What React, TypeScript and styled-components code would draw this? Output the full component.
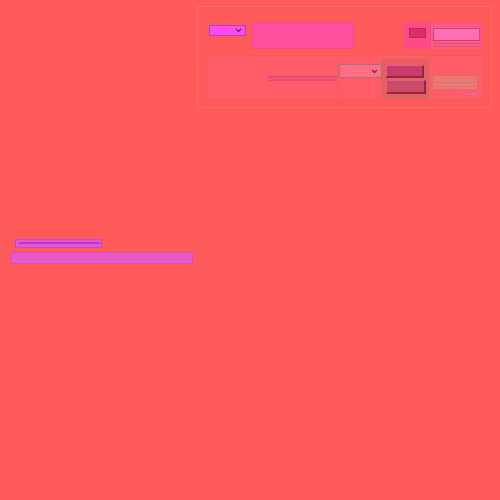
import styled, { createGlobalStyle } from "styled-components";

const Global = createGlobalStyle`
  html, body {
    margin: 0;
    padding: 0;
    background: #ff5a5a;
    font-family: "Liberation Sans", Arial, sans-serif;
  }
`;

// styled-components

const Page = styled.div`
  width: 500px;
  height: 500px;
  background: #ff5a5a;
  overflow: hidden;
`;

const Panel = styled.div`
  margin: 6px 0 0 197px;
  width: 293px;
  height: 100px;
  border: 1px solid #ff6a66;
  display: flex;
  flex-direction: column;
`;

const TopRow = styled.div`
  display: flex;
  align-items: flex-start;
  margin-top: 15px;
  height: 27px;
  padding-right: 9px;
`;

const Select = styled.div<{ $w: number; $h: number; $bg: string; $border: string }>`
  width: ${(p) => p.$w}px;
  height: ${(p) => p.$h}px;
  box-sizing: border-box;
  background: ${(p) => p.$bg};
  border: 1px solid ${(p) => p.$border};
  display: flex;
  align-items: center;
  justify-content: flex-end;
  padding-right: 3px;
  svg {
    display: block;
  }
`;

const FirstSelect = styled(Select)`
  margin: 3px 0 0 11px;
`;

const PinkBox = styled.div`
  margin-left: 6px;
  width: 102px;
  height: 27px;
  box-sizing: border-box;
  background: #ff4f9c;
  border: 1px solid #f04896;
`;

const Group = styled.div`
  margin-left: auto;
  width: 78px;
  height: 27px;
  display: flex;
  background: #ff4a8a;
`;

const GroupLeft = styled.div`
  width: 26px;
  display: flex;
  justify-content: center;
  padding-top: 6px;
  border-right: 1px solid #f0488a;
`;

const DarkButton = styled.div`
  width: 17px;
  height: 10px;
  box-sizing: border-box;
  background: #d8306a;
  border: 1px solid #b8285a;
`;

const GroupRight = styled.div`
  flex: 1;
  background: #ff5c7c;
  border-top: 1px solid #f05090;
  border-right: 1px solid #f05090;
  padding: 5px 1px 0 2px;
  display: flex;
  flex-direction: column;
  gap: 1px;
`;

const Input = styled.div`
  height: 13px;
  box-sizing: border-box;
  background: #ff6eb4;
  border: 1px solid #b84a88;
  border-right-color: #c85090;
`;

const Hint = styled.div`
  height: 1px;
  background: #d85088;
  margin-top: 1px;
`;

const BottomRow = styled.div`
  margin: 6px 0 0 8px;
  width: 278px;
  height: 45px;
  box-sizing: border-box;
  background: #ff5c68;
  border: 1px solid #f8546a;
  display: flex;
  align-items: flex-start;
  padding-left: 61px;
`;

const Slider = styled.div`
  margin-top: 20px;
  width: 69px;
  height: 5px;
  box-sizing: border-box;
  background: #f0507a;
  border-top: 1px solid #d84870;
  border-bottom: 1px solid #e04c78;
`;

const SelectColumn = styled.div`
  width: 45px;
  height: 39px;
  margin-top: 3px;
  display: flex;
  flex-direction: column;
  padding: 5px 0 0 1px;
  box-sizing: border-box;
  border-left: 1px solid #f8586a;
  border-right: 1px solid #f8586a;
`;

const ButtonStack = styled.div`
  margin: 3px 0 0 0;
  width: 47px;
  height: 39px;
  box-sizing: border-box;
  background: #e85c62;
  border: 1px solid #c87058;
  display: flex;
  flex-direction: column;
  padding: 5px 0 0 3px;
  gap: 2px;
`;

const StackButton = styled.div<{ $w: number; $h: number; $bg: string }>`
  width: ${(p) => p.$w}px;
  height: ${(p) => p.$h}px;
  box-sizing: border-box;
  background: ${(p) => p.$bg};
  border: 1px solid #e06080;
  border-right: 2px solid #8a2a44;
  border-bottom: 2px solid #8a2a44;
`;

const StripeBox = styled.div`
  margin: 16px 0 0 1px;
  width: 50px;
  height: 26px;
  box-sizing: border-box;
  border: 1px solid #e86a6a;
  padding: 3px 2px 0 2px;
  display: flex;
  flex-direction: column;
`;

const Stripes = styled.div`
  display: flex;
  flex-direction: column;
  gap: 1px;
  background: #ff7080;
`;

const Stripe = styled.div<{ $c: string }>`
  height: 1px;
  background: ${(p) => p.$c};
`;

const StripeFoot = styled.div`
  margin-top: 4px;
  height: 2px;
  width: 15px;
  align-self: flex-end;
  background: #f060b0;
`;

const LeftBlock = styled.div`
  margin: 131px 0 0 11px;
  display: flex;
  flex-direction: column;
  gap: 4px;
`;

const SmallBar = styled.div`
  margin-left: 4px;
  width: 87px;
  height: 9px;
  box-sizing: border-box;
  background: #e456d8;
  border: 1px solid #c848c8;
  padding: 2px 1px 0 3px;
`;

const SmallBarLine = styled.div`
  height: 2px;
  background: #c038c8;
`;

const WideBar = styled.div`
  width: 182px;
  height: 12px;
  box-sizing: border-box;
  background: #e65ac6;
  border: 1px solid #d848d0;
`;

const Chevron = ({ c }: { c: string }) => (
  <svg width="7" height="5" viewBox="0 0 7 5">
    <path d="M1 1 L3.5 3.5 L6 1" fill="none" stroke={c} strokeWidth="1.3" />
  </svg>
);

const stripeColors = ["#d0806c", "#c8846a", "#d8886a", "#c87c6c", "#d0886a", "#c8806c", "#d8886a"];

export default function App() {
  return (
    <Page>
      <Global />
      <Panel>
        <TopRow>
          <FirstSelect $w={37} $h={11} $bg="#ff48ee" $border="#9850b8">
            <Chevron c="#6a2a60" />
          </FirstSelect>
          <PinkBox />
          <Group>
            <GroupLeft>
              <DarkButton />
            </GroupLeft>
            <GroupRight>
              <Input />
              <Hint />
              <Hint />
            </GroupRight>
          </Group>
        </TopRow>
        <BottomRow>
          <Slider />
          <SelectColumn>
            <Select $w={43} $h={14} $bg="#ff6e86" $border="#a87070">
              <Chevron c="#7a3040" />
            </Select>
          </SelectColumn>
          <ButtonStack>
            <StackButton $w={38} $h={13} $bg="#cc3a6a" />
            <StackButton $w={40} $h={14} $bg="#cc4a66" />
          </ButtonStack>
          <StripeBox>
            <Stripes>
              {stripeColors.map((c, i) => (
                <Stripe key={i} $c={c} />
              ))}
            </Stripes>
            <StripeFoot />
          </StripeBox>
        </BottomRow>
      </Panel>
      <LeftBlock>
        <SmallBar>
          <SmallBarLine />
        </SmallBar>
        <WideBar />
      </LeftBlock>
    </Page>
  );
}
